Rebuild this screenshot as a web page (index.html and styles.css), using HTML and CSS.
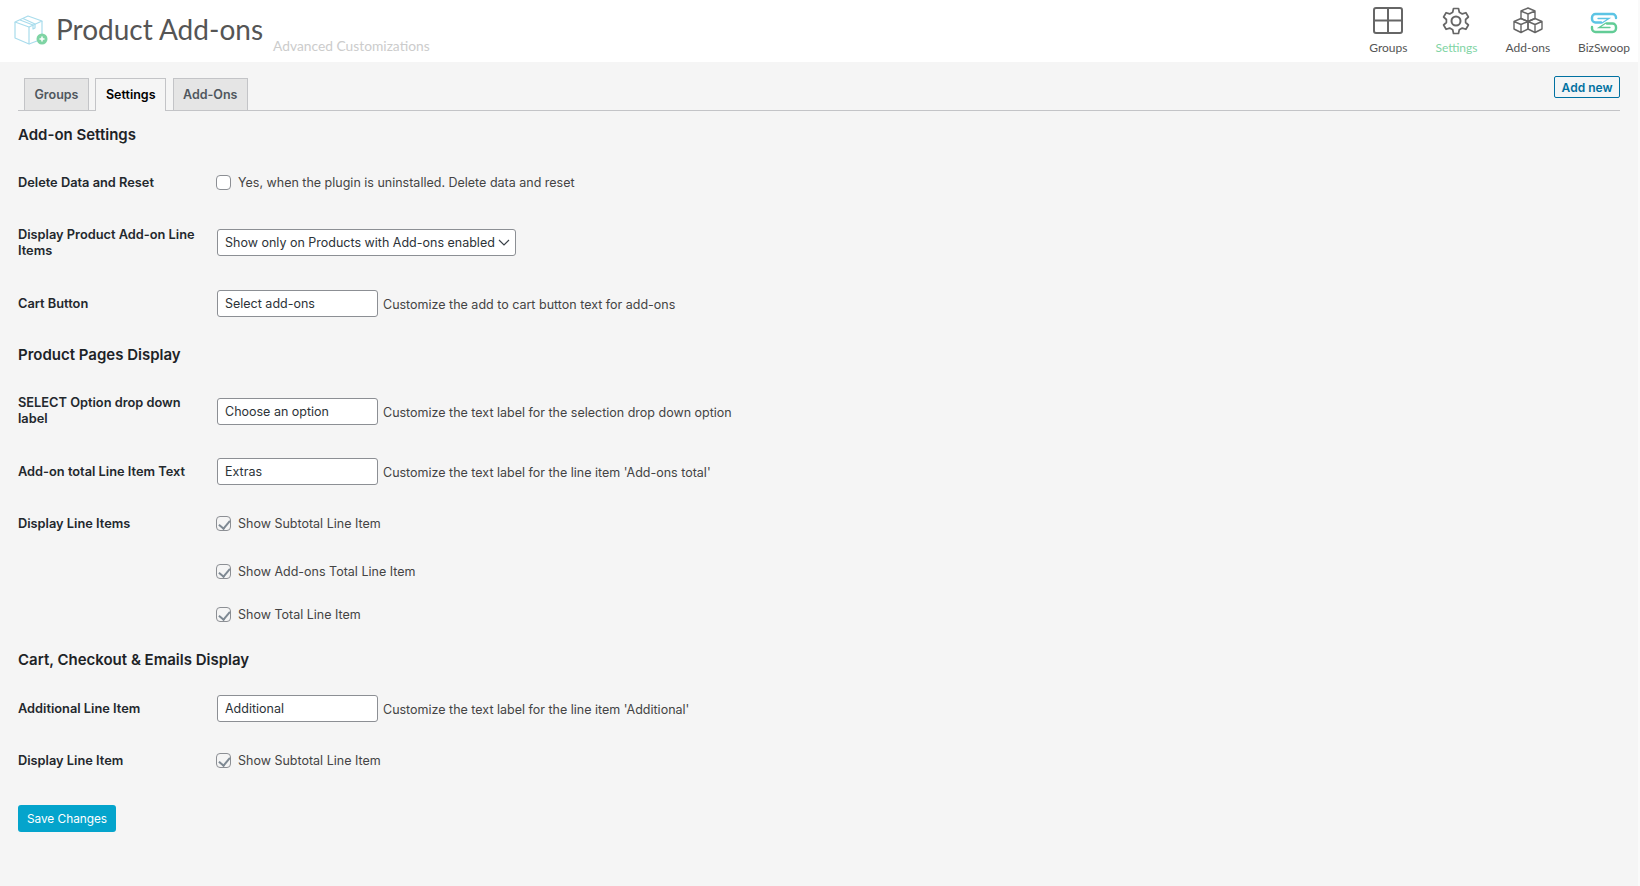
FILE: index.html
```html
<!DOCTYPE html>
<html lang="en">
<head>
  <meta charset="UTF-8" />
  <meta name="viewport" content="width=device-width, initial-scale=1.0"/>
  <title>Product Add-ons</title>
  <link rel="stylesheet" href="styles.css">
</head>
<body>

  <header class="topbar">
    <div class="brand">
      <svg class="brand-logo" width="34" height="30" viewBox="0 0 34 30" fill="none">
        <g stroke="#a9dcec" stroke-width="1.2" stroke-linejoin="round">
          <path d="M1 7 L14 1 L28 6 L15 12 Z" />
          <path d="M1 7 V23 L15 29 V12" />
          <path d="M28 6 V20" />
          <path d="M15 29 L23 26" />
          <path d="M6 5 L19 10 V14 L21 13 V9 L9 3.500" />
        </g>
        <circle cx="28" cy="24" r="5.500" fill="#7fd4a4" />
        <path d="M25.500 24 H30.500 M28 21.500 V26.500" stroke="#fff" stroke-width="1.500" />
      </svg>
      <h1 class="brand-title">Product Add-ons</h1>
      <span class="brand-sub">Advanced Customizations</span>
    </div>
    <nav class="topnav">
      <a class="topnav-item">
        <svg width="30" height="27" viewBox="0 0 30 27" fill="none" stroke="#666" stroke-width="2">
          <rect x="1" y="1" width="28" height="25" rx="2" />
          <path d="M15 1 V26 M1 13.500 H29" />
        </svg>
        <span>Groups</span>
      </a>
      <a class="topnav-item active">
        <svg width="28" height="28" viewBox="0 0 28 28" fill="none" stroke="#666" stroke-width="1.700" stroke-linejoin="round">
          <path d="M11.500 1.500 H16.500 L17.300 5.200 L20.300 6.900 L23.900 5.700 L26.400 10 L23.600 12.500 V15.500 L26.400 18 L23.900 22.300 L20.300 21.100 L17.300 22.800 L16.500 26.500 H11.500 L10.700 22.800 L7.700 21.100 L4.100 22.300 L1.600 18 L4.400 15.500 V12.500 L1.600 10 L4.100 5.700 L7.700 6.900 L10.700 5.200 Z" />
          <circle cx="14" cy="14" r="4.500" stroke-width="2" />
        </svg>
        <span>Settings</span>
      </a>
      <a class="topnav-item">
        <svg width="30" height="27" viewBox="0 0 30 27" fill="none" stroke="#666" stroke-width="1.400" stroke-linejoin="round">
          <path d="M15 1 L22 4 V11.500 L15 14.500 L8 11.500 V4 Z M8 4 L15 7 L22 4 M15 7 V14.500" />
          <path d="M8 11.500 L15 14.500 V22 L8 25.500 L1 22 V14.500 Z M1 14.500 L8 17.500 L15 14.500 M8 17.500 V25.500" />
          <path d="M22 11.500 L29 14.500 V22 L22 25.500 L15 22 V14.500 Z M15 14.500 L22 17.500 L29 14.500 M22 17.500 V25.500" />
        </svg>
        <span>Add-ons</span>
      </a>
      <a class="topnav-item">
        <svg class="biz-logo" width="28" height="22" viewBox="0 0 28 22" fill="none" stroke-width="2.400" stroke-linecap="round">
          <path d="M26 6 V5.500 A3.500 3.500 0 0 0 22.500 2 H5.500 A3.500 3.500 0 0 0 2 5.500 V7 A3.500 3.500 0 0 0 5.500 10.500 H11" stroke="#5cc4e4" />
          <path d="M8 6.500 H19 L12 11" stroke="#5cc4e4" stroke-width="1.300" />
          <path d="M2 15 V16.500 A3.500 3.500 0 0 0 5.500 20 H22.500 A3.500 3.500 0 0 0 26 16.500 V15 A3.500 3.500 0 0 0 22.500 11.500 H17" stroke="#62cc96" />
          <path d="M20 15.500 H9 L16 11" stroke="#62cc96" stroke-width="1.300" />
        </svg>
        <span>BizSwoop</span>
      </a>
    </nav>
  </header>

  <main class="content">
    <div class="tabs">
      <a class="tab">Groups</a>
      <a class="tab tab-active">Settings</a>
      <a class="tab">Add-Ons</a>
      <a class="add-new">Add new</a>
    </div>

    <form class="settings">
      <h2 class="section-title first">Add-on Settings</h2>

      <div class="row row-first row-low">
        <span class="row-label">Delete Data and Reset</span>
        <label class="check"><input type="checkbox"> Yes, when the plugin is uninstalled. Delete data and reset</label>
      </div>

      <div class="row row-wide row-low">
        <span class="row-label">Display Product Add-on Line Items</span>
        <div class="row-field">
          <select class="select">
            <option>Show only on Products with Add-ons enabled</option>
          </select>
        </div>
      </div>

      <div class="row">
        <span class="row-label">Cart Button</span>
        <div class="row-field">
          <input class="text-input" type="text" value="Select add-ons">
          <span class="hint">Customize the add to cart button text for add-ons</span>
        </div>
      </div>

      <h2 class="section-title">Product Pages Display</h2>

      <div class="row row-two">
        <span class="row-label">SELECT Option drop down label</span>
        <div class="row-field">
          <input class="text-input" type="text" value="Choose an option">
          <span class="hint">Customize the text label for the selection drop down option</span>
        </div>
      </div>

      <div class="row">
        <span class="row-label">Add-on total Line Item Text</span>
        <div class="row-field">
          <input class="text-input" type="text" value="Extras">
          <span class="hint">Customize the text label for the line item 'Add-ons total'</span>
        </div>
      </div>

      <div class="row row-tight row-low">
        <span class="row-label">Display Line Items</span>
        <label class="check"><input type="checkbox" checked> Show Subtotal Line Item</label>
      </div>

      <div class="row row-tight">
        <span class="row-label"></span>
        <label class="check"><input type="checkbox" checked> Show Add-ons Total Line Item</label>
      </div>

      <div class="row row-close">
        <span class="row-label"></span>
        <label class="check"><input type="checkbox" checked> Show Total Line Item</label>
      </div>

      <h2 class="section-title section-close">Cart, Checkout &amp; Emails Display</h2>

      <div class="row row-after">
        <span class="row-label">Additional Line Item</span>
        <div class="row-field">
          <input class="text-input" type="text" value="Additional">
          <span class="hint">Customize the text label for the line item 'Additional'</span>
        </div>
      </div>

      <div class="row row-tight row-low">
        <span class="row-label">Display Line Item</span>
        <label class="check"><input type="checkbox" checked> Show Subtotal Line Item</label>
      </div>

      <button class="save" type="button">Save Changes</button>
    </form>
  </main>

</body>
</html>
```

FILE: styles.css
```css
* {
  box-sizing: border-box;
  margin: 0;
  padding: 0;
}

body {
  font-family: Inter, 'Liberation Sans', sans-serif;
  font-size: 12.5px;
  color: #444;
  background: #f5f5f5;
  height: 886px;
  overflow: hidden;
  border-right: 2px solid #fafafa;
}

.topbar {
  height: 62px;
  background: #fff;
  display: flex;
  justify-content: space-between;
  padding: 7px 8px 0 14px;
}

.brand {
  display: flex;
  align-items: flex-start;
}

.brand-logo {
  margin-top: 8px;
}

.brand-title {
  font-family: Lato, sans-serif;
  font-size: 28px;
  font-weight: 400;
  line-height: 44px;
  color: #555;
  margin: 0 10px 0 8px;
}

.brand-sub {
  font-family: Lato, sans-serif;
  font-size: 13.8px;
  color: #ccc;
  margin-top: 30px;
}

.topnav {
  display: flex;
  gap: 28px;
}

.topnav-item {
  display: flex;
  flex-direction: column;
  align-items: center;
  height: 48px;
  justify-content: space-between;
  font-family: Lato, sans-serif;
  font-size: 12px;
  color: #555;
}

.topnav-item.active {
  color: #7fd4a4;
}

.biz-logo {
  margin-top: 5px;
}

.content {
  padding: 17px 18px 0;
}

.tabs {
  display: flex;
  align-items: flex-end;
  height: 32px;
  width: 1602px;
  padding-left: 6px;
  gap: 6.5px;
  border-bottom: 1px solid #c3c4c7;
}

.tab {
  height: 32px;
  padding: 0 9.5px;
  line-height: 32px;
  font-weight: 600;
  color: #50575e;
  background: #e5e5e5;
  border: 1px solid #c3c4c7;
  border-bottom: none;
}

.tab-active {
  height: 33px;
  margin-bottom: -1px;
  color: #000;
  background: #f5f5f5;
}

.add-new {
  margin-left: auto;
  align-self: flex-start;
  margin-top: -3px;
  height: 22px;
  line-height: 22px;
  padding: 0 6.5px;
  font-size: 12px;
  font-weight: 600;
  color: #0071a1;
  background: #f3f5f6;
  border: 1px solid #0071a1;
  border-radius: 2px;
}

.section-title {
  font-size: 15px;
  font-weight: 600;
  line-height: 20px;
  color: #1d2327;
  margin-top: 28px;
}

.section-title.first {
  margin-top: 14px;
}

.section-title.section-close {
  margin-top: 26px;
}

.row {
  display: grid;
  grid-template-columns: 199px 1fr;
  align-items: center;
  margin-top: 31px;
}

.row-first {
  margin-top: 27px;
}

.row-wide {
  margin-top: 34px;
}

.row-two {
  margin-top: 30px;
}

.row-tight {
  margin-top: 28px;
}

.row-close {
  margin-top: 23px;
}

.row-after {
  margin-top: 25px;
}

.row-label {
  font-size: 12.8px;
  font-weight: 600;
  line-height: 16px;
  color: #23282d;
  padding-right: 12px;
}

.row-low .row-label {
  padding-top: 1px;
}

.row-field {
  display: flex;
  align-items: center;
  gap: 5px;
}

.hint {
  margin-top: 2px;
}

.check {
  display: flex;
  align-items: center;
  gap: 7px;
  height: 20px;
}

.check input {
  appearance: none;
  width: 15px;
  height: 15px;
  margin-left: -1px;
  background: #fff;
  border: 1px solid #8c8f94;
  border-radius: 4px;
  position: relative;
}

.check input:checked {
  background: #f5f5f5;
}

.check input:checked::before {
  content: "";
  position: absolute;
  left: 4px;
  top: 1px;
  width: 5px;
  height: 9px;
  border: solid #7e8993;
  border-width: 0 2px 2px 0;
  transform: rotate(40deg);
}

.text-input,
.select {
  font: inherit;
  color: #2c3338;
  height: 27px;
  background: #fff;
  border: 1px solid #8c8f94;
  border-radius: 3px;
  padding: 0 7px;
}

.text-input {
  width: 161px;
}

.select {
  appearance: none;
  width: 299px;
  background: #fff url("data:image/svg+xml,%3Csvg xmlns='http://www.w3.org/2000/svg' width='12' height='7'%3E%3Cpath d='M1 1l5 5 5-5' fill='none' stroke='%233c434a' stroke-width='1.200'/%3E%3C/svg%3E") no-repeat right 5px center;
}

.save {
  display: block;
  font: inherit;
  font-size: 11.8px;
  height: 27px;
  width: 98px;
  margin-top: 35px;
  color: #fff;
  background: #04a4cc;
  border: none;
  border-radius: 3px;
}
```
